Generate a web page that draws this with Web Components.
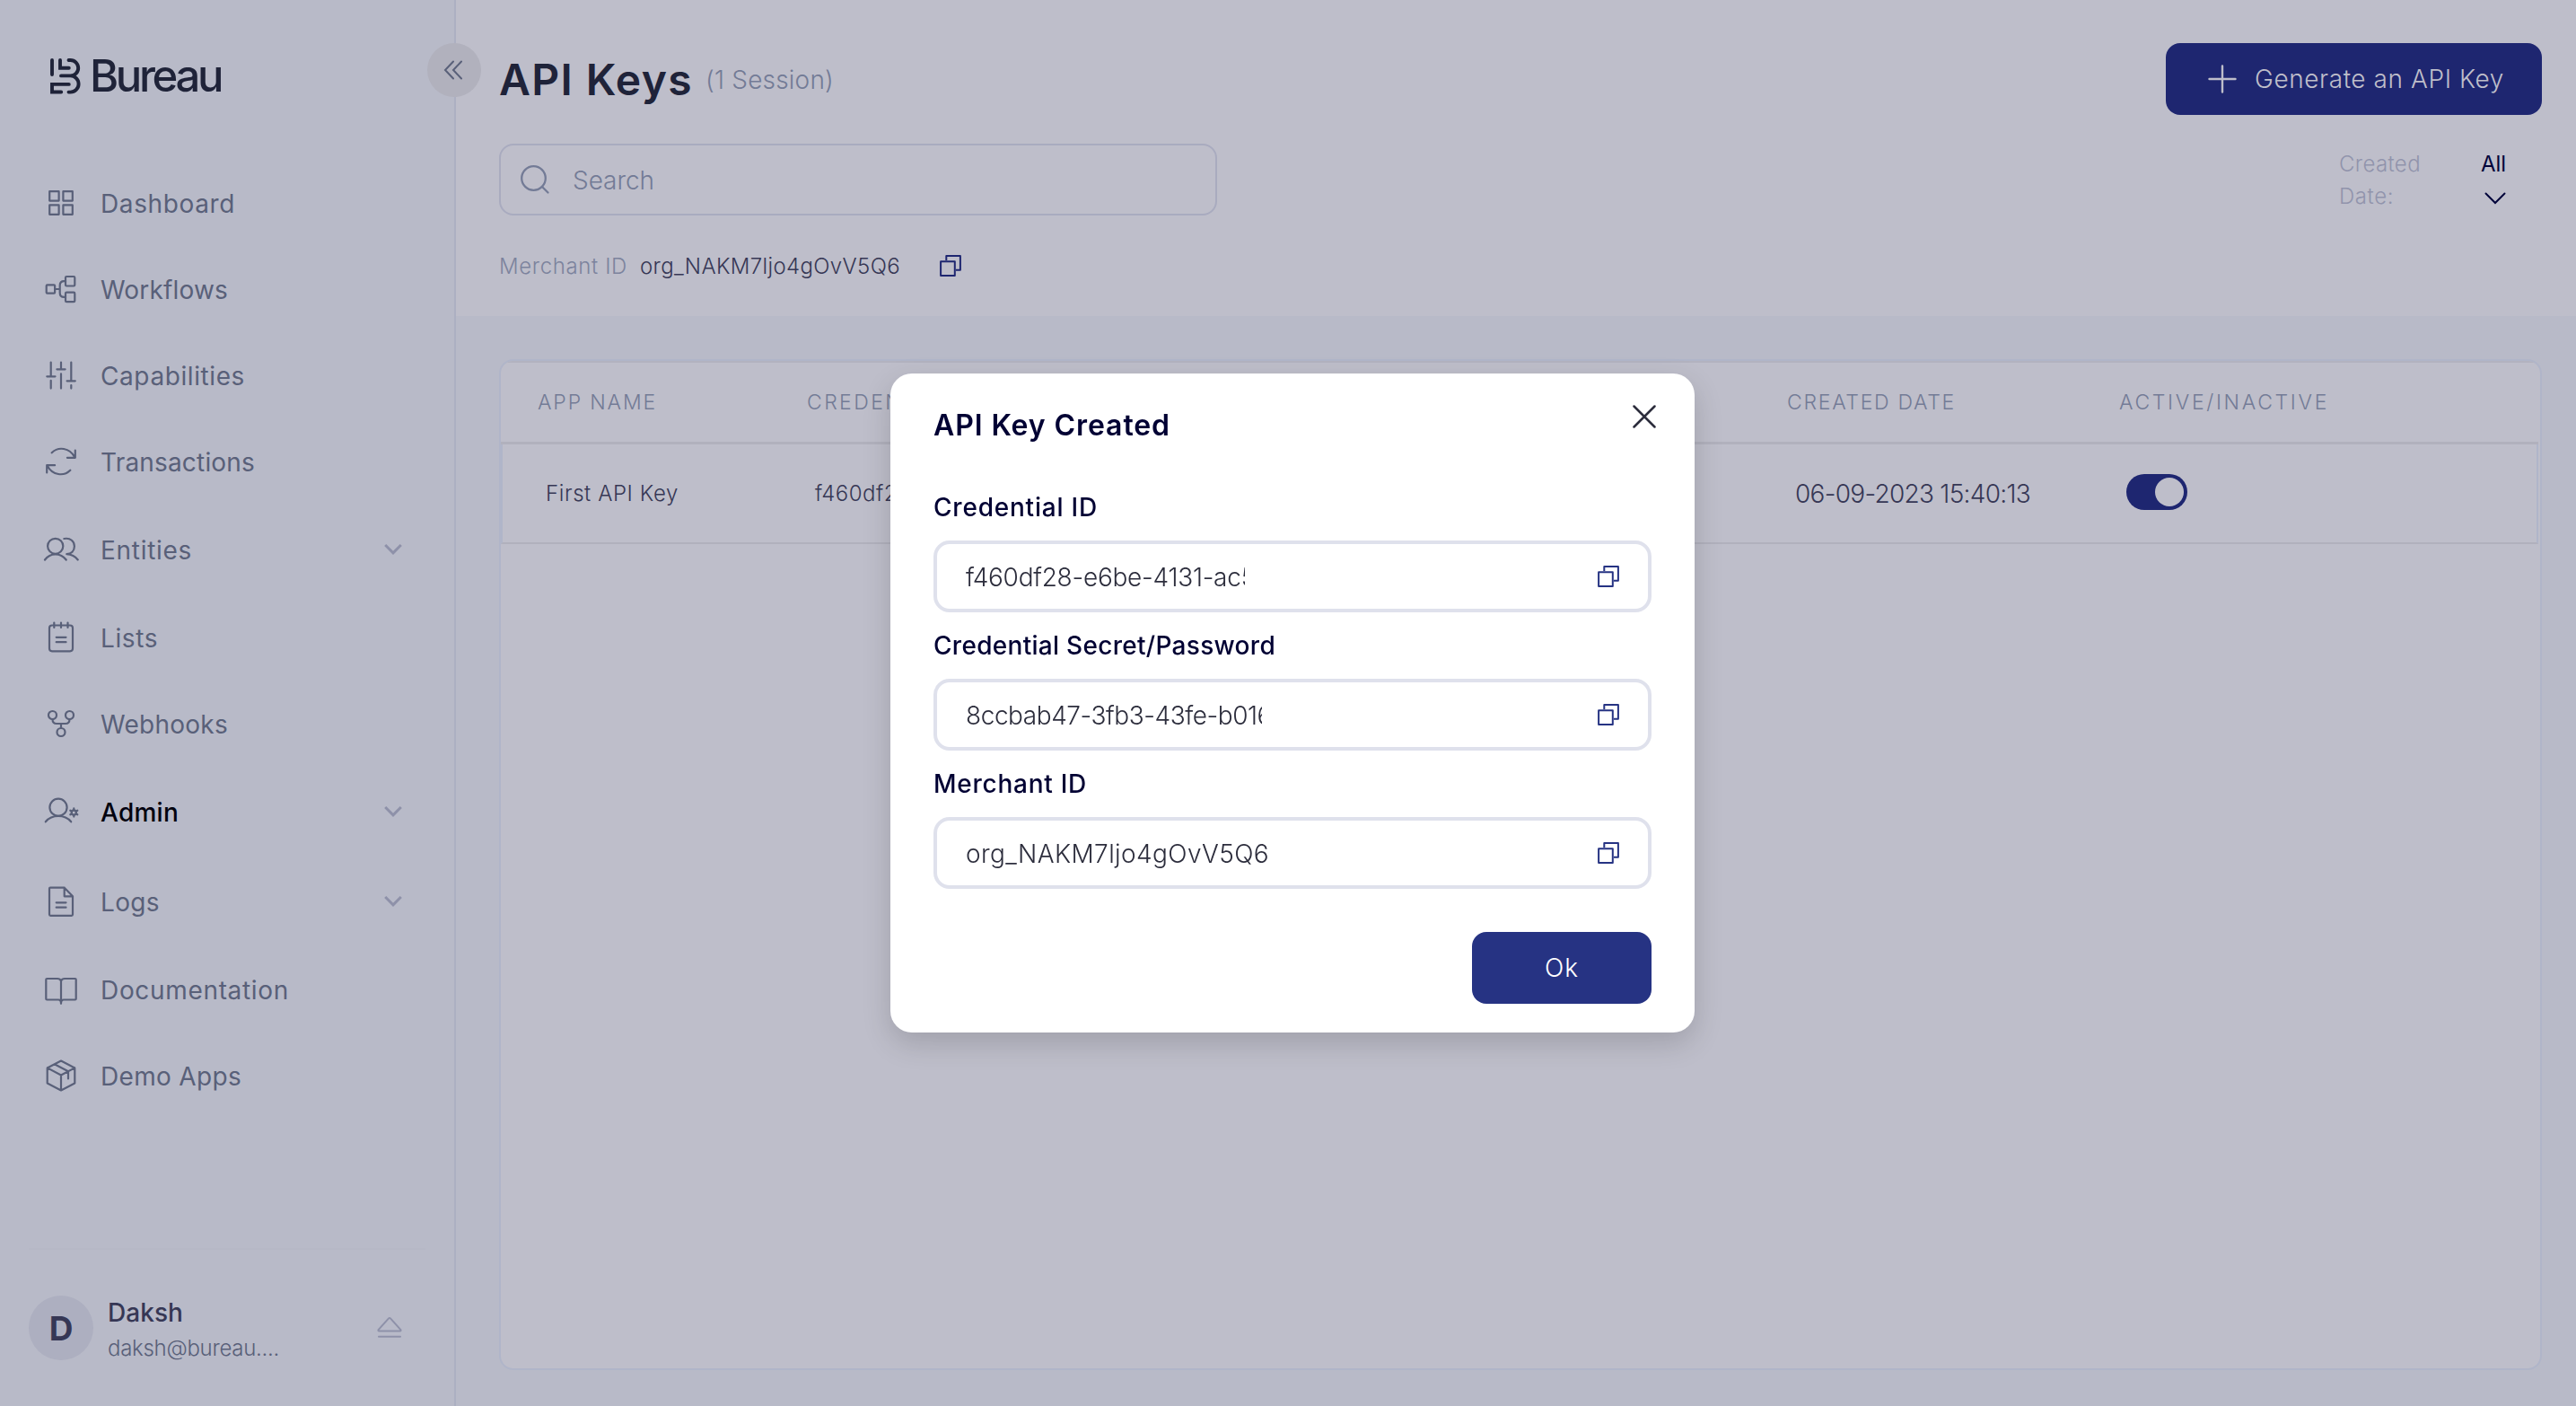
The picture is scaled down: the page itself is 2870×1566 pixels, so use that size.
<!DOCTYPE html>
<html lang="en">
<head>
<meta charset="utf-8">
<title>API Keys</title>
<style>
    html, body {
        margin: 0;
        height: 100%;
        overflow: hidden;
    }
    body {
        font-family: Inter, "Noto Sans", sans-serif;
        color: #363755;
        background: #b8bac8;
    }
</style>
</head>
<body>
<app-shell>
    <side-bar slot="side">
        <nav-item icon="dashboard" length="150">Dashboard</nav-item>
        <nav-item icon="workflows" length="142">Workflows</nav-item>
        <nav-item icon="capabilities" length="161">Capabilities</nav-item>
        <nav-item icon="transactions" length="172">Transactions</nav-item>
        <nav-item icon="entities" length="102" expandable>Entities</nav-item>
        <nav-item icon="lists" length="64">Lists</nav-item>
        <nav-item icon="webhooks" length="142">Webhooks</nav-item>
        <nav-item icon="admin" length="87" expandable active>Admin</nav-item>
        <nav-item icon="logs" length="66" expandable>Logs</nav-item>
        <nav-item icon="docs" length="210">Documentation</nav-item>
        <nav-item icon="box" length="157">Demo Apps</nav-item>
    </side-bar>
    <page-header></page-header>
    <keys-table></keys-table>
</app-shell>

<key-modal>
    <key-field label="Credential ID" label-length="183" length="323" clip="311">f460df28-e6be-4131-ac5</key-field>
    <key-field label="Credential Secret/Password" label-length="381" length="341" clip="330">8ccbab47-3fb3-43fe-b016</key-field>
    <key-field label="Merchant ID" label-length="171" length="338">org_NAKM7ljo4gOvV5Q6</key-field>
</key-modal>

<script>
const icons = {
    dashboard: `<path d="M7.2 7.2h10.4v10.4H7.2zM22.4 7.2h10.4v10.4H22.4zM7.2 22.4h10.4v10.4H7.2zM22.4 22.4h10.4v10.4H22.4z"/>`,
    workflows: `<rect x="3.7" y="15.3" width="9.4" height="9.4" rx="1"/><rect x="25" y="6" width="10.3" height="10.5" rx="1.2"/><rect x="25" y="23.7" width="10.3" height="10.5" rx="1.2"/><path d="M13.5 20h5.2M25 11.2h-1.6q-4.7 0-4.7 4.7v8.3q0 4.7 4.7 4.7H25"/>`,
    capabilities: `<path d="M8.7 5.6v15.7M4.3 21.3h9.2M8.7 25.8v8.8M20 5.6v7.7M15.4 13.3h9.2M20 18.3v16.3M31.3 5.6v20.7M26.6 26.3h9.2M31.3 31v3.6"/>`,
    transactions: `<path d="M9.7 10.3C17 3 29.5 4.5 35.3 15.3M35.8 7.6v8.2h-8.9M30.3 29.7C23 37 10.5 35.5 4.7 24.7M4.2 32.4v-8.2h8.9"/>`,
    entities: `<ellipse cx="13.7" cy="16.3" rx="8.6" ry="8.5"/><path d="M2 31.5C8 23.2 19.5 23.2 25.7 31.5M23.4 8c7.2-1.4 11.5 3.2 11.5 8.5 0 5.2-3.5 8.7-8.6 8.7q8 .6 12.4 6.3"/>`,
    lists: `<rect x="7" y="6.5" width="26" height="28.8" rx="3"/><path d="M12.3 3.5v5.5M20 3.5v5.5M27.5 3.5v5.5M14.7 19.8h10.8M14.7 25.2h10.8"/>`,
    webhooks: `<circle cx="10.5" cy="10.5" r="4.5"/><circle cx="29.5" cy="10.5" r="4.5"/><circle cx="20" cy="29.5" r="4.5"/><path d="M10.5 15q0 5 4.5 5h10q4.5 0 4.5-5M20 20v5"/>`,
    admin: `<circle cx="17" cy="15.3" r="9.6"/><path d="M2.8 31.3C10 22.8 24 22.8 31.2 31.3"/><circle cx="34.3" cy="21" r="2.6"/><path d="M34.3 16.4v2M34.3 23.6v2M30.3 18.7l1.8 1M36.5 22.3l1.8 1M30.3 23.3l1.8-1M36.5 19.7l1.8-1"/>`,
    logs: `<path d="M8 4.7h15.7L33 14.3v20.2q0 1.3-1.3 1.3H8.3Q7 35.8 7 34.5V5.7q0-1 1-1zM23.7 4.7v9.6H33M14.7 21.3h10.8M14.7 26.7h10.8"/>`,
    docs: `<path d="M20 10.5q-1-2.5-4-2.5H4.3q-1 0-1 1v21.5q0 1 1 1H17q3 0 3 4.3 0-4.3 3-4.3h12.7q1 0 1-1V9q0-1-1-1H24q-3 0-4 2.5zM20 10.5v25"/>`,
    box: `<path d="M20 3.6l15.3 7.8v17.2L20 36.4 4.7 28.6V11.4zM4.7 11.4L20 19.5l15.3-8.1M20 19.5v16.9M12.7 7.3L28 15.3v8.2"/>`,
};

const copyIcon = `<svg class="copy" width="24" height="24" viewBox="0 0 24 24" fill="none" stroke="currentColor" stroke-width="2" stroke-linejoin="round"><path d="M7.3 6V1.1h15.6v15.7H18"/><path d="M1.1 7.2h15.7v15.7H1.1z"/></svg>`;

// Spreads one line of text over a set length by adjusting its tracking.
class TextRun extends HTMLElement {
    constructor() {
        super();
        this.attachShadow({mode: "open"});
        this.shadowRoot.innerHTML = `
            <style>
                :host { display: block; white-space: nowrap; }
                span { display: inline-block; }
            </style>
            <span><slot></slot></span>
        `;
    }

    connectedCallback() {
        const length = parseFloat(this.getAttribute("length"));
        if (!length) return;
        const span = this.shadowRoot.querySelector("span");
        const natural = span.getBoundingClientRect().width;
        const spacing = (length - natural) / this.textContent.length;
        span.style.letterSpacing = spacing.toFixed(3) + "px";
    }
}
customElements.define("text-run", TextRun);

class AppShell extends HTMLElement {
    constructor() {
        super();
        this.attachShadow({mode: "open"});
        this.shadowRoot.innerHTML = `
            <style>
                :host { display: flex; width: 100%; height: 100vh; }
                main {
                    flex: 1;
                    min-width: 0;
                    display: flex;
                    flex-direction: column;
                }
            </style>
            <slot name="side"></slot>
            <main><slot></slot></main>
        `;
    }
}
customElements.define("app-shell", AppShell);

class NavItem extends HTMLElement {
    connectedCallback() {
        const expandable = this.hasAttribute("expandable");
        this.attachShadow({mode: "open"});
        this.shadowRoot.innerHTML = `
            <style>
                :host {
                    display: flex;
                    align-items: center;
                    height: 96px;
                    padding: 0 58px 0 48px;
                    color: #596079;
                    font-size: 28px;
                    font-weight: 400;
                }
                :host([expandable]) { height: 100px; }
                :host([active]) text-run { color: #02020f; font-weight: 500; }
                text-run { margin-left: 24px; padding-top: 1px; flex: 1; }
                .chevron { color: #8e91a9; }
            </style>
            <svg width="40" height="40" viewBox="0 0 40 40" fill="none" stroke="currentColor" stroke-width="2.2" stroke-linecap="round" stroke-linejoin="round">${icons[this.getAttribute("icon")]}</svg>
            <text-run length="${this.getAttribute("length")}">${this.textContent}</text-run>
            ${expandable ? `<svg class="chevron" width="20" height="14" viewBox="0 0 20 14" fill="none" stroke="currentColor" stroke-width="3"><path d="M1.2 2l8.8 8.8L18.8 2"/></svg>` : ""}
        `;
    }
}
customElements.define("nav-item", NavItem);

class SideBar extends HTMLElement {
    connectedCallback() {
        this.attachShadow({mode: "open"});
        this.shadowRoot.innerHTML = `
            <style>
                :host {
                    display: flex;
                    flex-direction: column;
                    box-sizing: border-box;
                    width: 508px;
                    height: 100%;
                    border-right: 2px solid #acb0c2;
                    background: #b8bac8;
                    position: relative;
                }
                .logo {
                    height: 40px;
                    padding: 65px 0 73px 56px;
                    display: flex;
                    align-items: center;
                    gap: 9px;
                    color: #1f2339;
                    font-size: 49px;
                    font-weight: 500;
                    line-height: 40px;
                }
                .collapse {
                    position: absolute;
                    top: 48px;
                    right: -30px;
                    width: 60px;
                    height: 60px;
                    border-radius: 50%;
                    background: #b1b1bd;
                    display: flex;
                    align-items: center;
                    justify-content: center;
                    color: #596079;
                }
                .collapse svg { margin-right: 3px; }
                footer {
                    margin: auto 32px 0;
                    height: 123px;
                    padding-top: 51px;
                    border-top: 2px solid #b6b8c6;
                    display: flex;
                }
                .avatar {
                    width: 72px;
                    height: 72px;
                    border-radius: 50%;
                    background: #adafc0;
                    font-size: 37px;
                    font-weight: 700;
                    line-height: 73px;
                    text-align: center;
                }
                .who { flex: 1; margin-left: 16px; }
                .name { font-size: 28px; font-weight: 500; line-height: 38px; }
                .mail { font-size: 24px; font-weight: 300; line-height: 41px; color: #596079; }
                .eject { margin: 23px 26px 0 0; color: #8e91a9; }
            </style>
            <div class="logo">
                <svg width="35" height="40" viewBox="0 0 35 40" fill="none" stroke="currentColor" stroke-width="3.9" stroke-linecap="round"><path d="M2 2v16M11 2v8.7h9.8M20.5 2h2a8.7 8.7 0 0 1 0 17.4H12M22.5 19.4a9.1 9.1 0 0 1 0 18.2h-2M20.8 28.9H2v8.6h10.2"/></svg>
                <text-run length="146">Bureau</text-run>
            </div>
            <div class="collapse">
                <svg width="22" height="22" viewBox="0 0 22 22" fill="none" stroke="currentColor" stroke-width="2" stroke-linecap="round"><path d="M11 1.5L2 11l9 9.5M20 1.5L11 11l9 9.5"/></svg>
            </div>
            <slot></slot>
            <footer>
                <div class="avatar">D</div>
                <div class="who">
                    <text-run class="name" length="84">Daksh</text-run>
                    <text-run class="mail" length="191">daksh@bureau....</text-run>
                </div>
                <svg class="eject" width="28" height="26" viewBox="0 0 28 26" fill="none" stroke="currentColor" stroke-width="2" stroke-linejoin="round" stroke-linecap="round"><path d="M12.8 2.6q1.2-1.2 2.4 0l11 12.2q1 1.7-.7 1.7h-23q-1.7 0-.7-1.7zM2 22.8h24"/></svg>
            </footer>
        `;
    }
}
customElements.define("side-bar", SideBar);

class PageHeader extends HTMLElement {
    connectedCallback() {
        this.attachShadow({mode: "open"});
        this.shadowRoot.innerHTML = `
            <style>
                :host {
                    display: block;
                    box-sizing: border-box;
                    height: 352px;
                    padding: 48px 38px 0 48px;
                    background: #bebeca;
                    font-weight: 300;
                }
                .row { display: flex; align-items: center; height: 80px; }
                .row + .row { margin-top: 32px; }
                .title { font-size: 48px; font-weight: 600; color: #1f2339; }
                .count { margin-left: 14px; padding-top: 1px; font-size: 28px; color: #737b96; }
                .generate {
                    margin-left: auto;
                    box-sizing: border-box;
                    width: 419px;
                    height: 80px;
                    padding-left: 47px;
                    border-radius: 16px;
                    background: #1e2670;
                    color: #bebeca;
                    font-size: 28px;
                    display: flex;
                    align-items: center;
                    gap: 20px;
                }
                .search {
                    box-sizing: border-box;
                    width: 800px;
                    height: 80px;
                    padding-left: 21px;
                    border: 2px solid #a9abbf;
                    border-radius: 16px;
                    color: #737b96;
                    font-size: 28px;
                    display: flex;
                    align-items: center;
                    gap: 25px;
                }
                .search text-run { padding-top: 2px; }
                .filter {
                    margin-left: auto;
                    margin-right: 40px;
                    width: 186px;
                    padding-top: 2px;
                    display: flex;
                    justify-content: space-between;
                    font-size: 24px;
                    line-height: 36px;
                }
                .filter .by { color: #9194ac; }
                .filter .value {
                    color: #02043a;
                    font-weight: 400;
                    display: flex;
                    flex-direction: column;
                    align-items: flex-end;
                }
                .filter svg { margin-top: 13px; }
                .merchant {
                    display: flex;
                    align-items: center;
                    height: 34px;
                    margin-top: 39px;
                    font-size: 24px;
                }
                .merchant .key { color: #7c839d; }
                .merchant .id { margin-left: 14px; }
                .merchant text-run { padding-top: 1px; }
                .copy { margin-left: 44px; color: #1e2670; }
            </style>
            <div class="row">
                <text-run class="title" length="216">API Keys</text-run>
                <text-run class="count" length="143">(1 Session)</text-run>
                <div class="generate">
                    <svg width="32" height="32" viewBox="0 0 32 32" fill="none" stroke="currentColor" stroke-width="2.4" stroke-linecap="round"><path d="M16 1.5v29M1.5 16h29"/></svg>
                    <text-run length="278">Generate an API Key</text-run>
                </div>
            </div>
            <div class="row">
                <div class="search">
                    <svg width="34" height="34" viewBox="0 0 34 34" fill="none" stroke="currentColor" stroke-width="2.3" stroke-linecap="round"><circle cx="15.5" cy="15.5" r="13.3"/><path d="M25 25l6.5 6.5"/></svg>
                    <text-run length="91">Search</text-run>
                </div>
                <div class="filter">
                    <div class="by">
                        <text-run length="91">Created</text-run>
                        <text-run length="61">Date:</text-run>
                    </div>
                    <div class="value">
                        <text-run length="28">All</text-run>
                        <svg width="24" height="14" viewBox="0 0 24 14" fill="none" stroke="currentColor" stroke-width="2" stroke-linecap="round"><path d="M1.5 1.5L12 12 22.5 1.5"/></svg>
                    </div>
                </div>
            </div>
            <div class="merchant">
                <text-run class="key" length="143">Merchant ID</text-run>
                <text-run class="id" length="290">org_NAKM7ljo4gOvV5Q6</text-run>
                ${copyIcon}
            </div>
        `;
    }
}
customElements.define("page-header", PageHeader);

class ToggleSwitch extends HTMLElement {
    constructor() {
        super();
        this.attachShadow({mode: "open"});
        this.shadowRoot.innerHTML = `
            <style>
                :host {
                    display: flex;
                    justify-content: flex-end;
                    box-sizing: border-box;
                    width: 68px;
                    height: 40px;
                    padding: 4px;
                    border-radius: 20px;
                    background: #1e2670;
                }
                i { width: 32px; height: 32px; border-radius: 50%; background: #bebeca; }
            </style>
            <i></i>
        `;
    }
}
customElements.define("toggle-switch", ToggleSwitch);

class KeysTable extends HTMLElement {
    connectedCallback() {
        this.attachShadow({mode: "open"});
        this.shadowRoot.innerHTML = `
            <style>
                :host {
                    display: flex;
                    flex: 1;
                    box-sizing: border-box;
                    padding: 48px 38px 40px 48px;
                }
                .card {
                    flex: 1;
                    border: 2px solid #b0b5c9;
                    border-radius: 16px;
                    background: #bebeca;
                    overflow: hidden;
                    font-weight: 300;
                }
                .head, .line {
                    display: grid;
                    grid-template-columns: 300px 1092px 370px 1fr;
                    align-items: center;
                    box-sizing: border-box;
                }
                .head {
                    height: 93px;
                    margin-right: 2px;
                    padding-left: 41px;
                    border-top: 2px solid #b2b2bf;
                    border-bottom: 3px solid #b1b1bd;
                    color: #737b96;
                    font-size: 23px;
                }
                .line {
                    height: 111px;
                    margin-right: 2px;
                    padding-left: 48px;
                    border: 2px solid #b0b5c9;
                    border-top: 0;
                    border-bottom-color: #b1b1bd;
                    font-size: 24px;
                }
                .date { font-size: 28px; }
                toggle-switch { margin-left: -1px; margin-top: -3px; }
            </style>
            <div class="card">
                <div class="head">
                    <text-run length="133">APP NAME</text-run>
                    <text-run length="202">CREDENTIAL ID</text-run>
                    <text-run length="188">CREATED DATE</text-run>
                    <text-run length="234">ACTIVE/INACTIVE</text-run>
                </div>
                <div class="line">
                    <text-run length="148">First API Key</text-run>
                    <text-run length="107">f460df28</text-run>
                    <text-run class="date" length="262">06-09-2023 15:40:13</text-run>
                    <toggle-switch></toggle-switch>
                </div>
            </div>
        `;
    }
}
customElements.define("keys-table", KeysTable);

class KeyField extends HTMLElement {
    connectedCallback() {
        const clip = this.getAttribute("clip");
        this.attachShadow({mode: "open"});
        this.shadowRoot.innerHTML = `
            <style>
                :host { display: block; height: 154px; }
                .label {
                    height: 74px;
                    line-height: 75px;
                    font-size: 28px;
                    font-weight: 500;
                    color: #000033;
                }
                .box {
                    box-sizing: border-box;
                    height: 80px;
                    padding: 0 32px;
                    border: 4px solid #dfe1ec;
                    border-radius: 18px;
                    display: flex;
                    align-items: center;
                    justify-content: space-between;
                    font-size: 28px;
                    font-weight: 300;
                    color: #2c2d3c;
                }
                .value { overflow: hidden; padding-top: 2px; }
                .copy { color: #263383; }
            </style>
            <text-run class="label" length="${this.getAttribute("label-length")}">${this.getAttribute("label")}</text-run>
            <div class="box">
                <div class="value" style="width: ${clip ? clip + "px" : "auto"}">
                    <text-run length="${this.getAttribute("length")}">${this.textContent}</text-run>
                </div>
                ${copyIcon}
            </div>
        `;
    }
}
customElements.define("key-field", KeyField);

class KeyModal extends HTMLElement {
    connectedCallback() {
        this.attachShadow({mode: "open"});
        this.shadowRoot.innerHTML = `
            <style>
                :host {
                    position: fixed;
                    inset: 0;
                    padding-left: 10px;
                    display: flex;
                    align-items: center;
                    justify-content: center;
                }
                .dialog {
                    box-sizing: border-box;
                    width: 896px;
                    height: 734px;
                    padding: 36px 48px 32px;
                    border-radius: 24px;
                    background: #fff;
                    box-shadow: 0 12px 32px rgba(0, 0, 0, 0.16);
                    display: flex;
                    flex-direction: column;
                }
                header {
                    height: 76px;
                    display: flex;
                    justify-content: space-between;
                    align-items: flex-start;
                }
                .title {
                    font-size: 32px;
                    font-weight: 600;
                    line-height: 43px;
                    color: #000033;
                }
                .close { margin: -1px -5px 0 0; color: #2c2d3c; }
                .fields { flex: 1; }
                button {
                    align-self: flex-end;
                    display: flex;
                    align-items: center;
                    justify-content: center;
                    width: 200px;
                    height: 80px;
                    border: 0;
                    border-radius: 16px;
                    background: #263383;
                    color: #fff;
                    font: 300 28px Inter, sans-serif;
                }
            </style>
            <div class="dialog">
                <header>
                    <text-run class="title" length="264">API Key Created</text-run>
                    <svg class="close" width="26" height="26" viewBox="0 0 26 26" fill="none" stroke="currentColor" stroke-width="2.5" stroke-linecap="round"><path d="M1.5 1.5l23 23M24.5 1.5l-23 23"/></svg>
                </header>
                <div class="fields"><slot></slot></div>
                <button><text-run length="38">Ok</text-run></button>
            </div>
        `;
    }
}
customElements.define("key-modal", KeyModal);
</script>
</body>
</html>
